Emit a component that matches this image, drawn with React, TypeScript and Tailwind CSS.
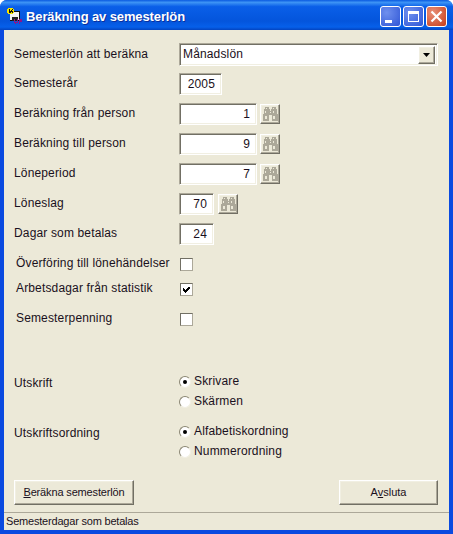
import { ReactNode } from "react";

const sunken =
  "border border-t-[#aca899] border-l-[#aca899] border-r-white border-b-white shadow-[inset_1px_1px_0_#716f64,inset_-1px_-1px_0_#f1efe2]";
const raised =
  "border border-t-white border-l-white border-r-[#716f64] border-b-[#716f64] shadow-[inset_-1px_-1px_0_#aca899,inset_1px_1px_0_#f1efe2] bg-[#ece9d8]";

function Binoculars() {
  return (
    <svg width="15" height="14" viewBox="0 0 15 14" shapeRendering="crispEdges">
      <path
        d="M2 0h4v2h1v2h1V2h1V0h4v2h1v5h1v7H9V8H6v6H0V7h1V2h1z"
        fill="#aca899"
      />
      <path d="M3 1h1v1H3zM10 1h1v1h-1zM2 4h1v2H2zM10 4h1v2h-1zM2 9h2v3H2zM10 9h2v3h-2zM7 5h1v1H7z" fill="#ece9d8" />
    </svg>
  );
}

function LookupButton({ gap }: { gap: string }) {
  return (
    <button className={`${raised} ${gap} flex h-[20px] w-[20px] items-center justify-center`}>
      <Binoculars />
    </button>
  );
}

function Field({ label, value, width, gap }: { label: string; value: string; width: string; gap?: string }) {
  return (
    <div className="flex h-[30px] items-center">
      <span className="w-[165px] pb-[3px]">{label}</span>
      <div className={`${sunken} ${width} h-[22px] bg-white pr-[6px] text-right leading-[21px]`}>{value}</div>
      {gap && <LookupButton gap={gap} />}
    </div>
  );
}

function Check({ label, checked, className }: { label: string; checked?: boolean; className: string }) {
  return (
    <div className={`flex h-[14px] items-center pl-[2px] ${className}`}>
      <span className="w-[164px] pb-[3px]">{label}</span>
      <div className="flex h-[13px] w-[13px] items-center justify-center border border-[#716f64] border-r-[#aca899] border-b-[#aca899] bg-white">
        {checked && (
          <svg width="9" height="9" viewBox="0 0 9 9" shapeRendering="crispEdges">
            <path d="M1 3h1v1h1v1h1V4h1V3h1V2h2v2H7v1H6v1H5v1H4v1H3V7H2V6H1z" fill="#000" />
          </svg>
        )}
      </div>
    </div>
  );
}

function Radio({ label, checked }: { label: string; checked?: boolean }) {
  return (
    <div className="flex h-[20px] items-center">
      <div className="relative h-[12px] w-[12px] rounded-full border border-t-[#8a8672] border-l-[#8a8672] border-r-[#f1efe2] border-b-[#f1efe2] bg-white">
        {checked && <div className="absolute left-[3px] top-[3px] h-[4px] w-[4px] rounded-full bg-black" />}
      </div>
      <span className="ml-[3px] pb-[2px]">{label}</span>
    </div>
  );
}

function RadioGroup({ label, className, children }: { label: string; className: string; children: ReactNode }) {
  return (
    <div className={`flex ${className}`}>
      <span className="w-[165px] pt-[2px]">{label}</span>
      <div>{children}</div>
    </div>
  );
}

function Caption({ children }: { children: ReactNode }) {
  return (
    <div className="flex h-[21px] w-[21px] items-center justify-center rounded-[3px] border border-white bg-[radial-gradient(circle_at_30%_30%,#6f90ee,#2f56d6)]">
      {children}
    </div>
  );
}

export default function App() {
  return (
    <div
      className="flex h-[534px] w-[453px] flex-col overflow-hidden rounded-t-[7px] bg-[#0a4ae0] text-[12px] tracking-[0.15px] text-[#1a1020]"
      style={{ fontFamily: '"Liberation Sans", Arial, sans-serif' }}
    >
      <div className="flex h-[30px] shrink-0 items-center bg-[linear-gradient(180deg,#0a5ae0_0%,#3d94f5_8%,#0a5fe8_22%,#0455dc_70%,#0660ea_90%,#0344c0_100%)] pl-[7px] pr-[6px]">
        <svg className="mt-[2px]" width="16" height="16" viewBox="0 0 16 16" shapeRendering="crispEdges">
          <path d="M3 3h10v10H3z" fill="#f4f4f4" />
          <path d="M3 3h10v1H3zM3 12h10v1H3zM12 3h1v10h-1z" fill="#111" />
          <path d="M5 9h6v4H5z" fill="#222" />
          <path d="M1 0h5v1h1v4H6v1H1V5H0V1h1z" fill="#f5e400" />
          <path d="M2 1h1v4H2zM3 3h1v-1h1V1h1v1H5v1h1v2H5V4H4v1H3z" fill="#111" />
          <path d="M7 11h1v3h2v-3h1v4H9v1H8v-1H7zM12 11h3v3h-2v2h-1z" fill="#8a168c" />
        </svg>
        <span className="ml-[3px] pt-[3px] text-[13px] font-bold tracking-[-0.12px] text-white [text-shadow:1px_1px_0_#0a2f9c]">
          Beräkning av semesterlön
        </span>
        <div className="mt-[3px] ml-auto flex gap-[2px]">
          <Caption>
            <div className="mt-[10px] mr-[4px] h-[3px] w-[7px] bg-white" />
          </Caption>
          <Caption>
            <div className="h-[11px] w-[11px] border border-t-[3px] border-white" />
          </Caption>
          <div className="flex h-[21px] w-[21px] items-center justify-center rounded-[3px] border border-white bg-[radial-gradient(circle_at_30%_30%,#e89078,#c83c18)]">
            <svg width="13" height="13" viewBox="0 0 13 13">
              <path d="M1.5 1.5l10 10M11.5 1.5l-10 10" stroke="#fff" strokeWidth="2.2" />
            </svg>
          </div>
        </div>
      </div>

      <div className="mx-[4px] mb-[4px] flex min-h-0 flex-1 flex-col bg-[#ece9d8]">
        <div className="flex flex-1 flex-col px-[10px] pt-[13px]">
          <div className="flex h-[23px] items-start">
            <span className="w-[165px] pt-[2px]">Semesterlön att beräkna</span>
            <div className={`${sunken} flex h-[23px] w-[259px] items-center justify-between bg-white pl-[3px] pr-[2px]`}>
              <span className="pb-[1px]">Månadslön</span>
              <div className={`${raised} flex h-[18px] w-[17px] items-center justify-center`}>
                <svg width="7" height="4" viewBox="0 0 7 4">
                  <path d="M0 0h7L3.5 4z" fill="#000" />
                </svg>
              </div>
            </div>
          </div>
          <div className="mt-[3px]">
            <Field label="Semesterår" value="2005" width="w-[43px]" />
            <Field label="Beräkning från person" value="1" width="w-[78px]" gap="ml-[3px]" />
            <Field label="Beräkning till person" value="9" width="w-[78px]" gap="ml-[3px]" />
            <Field label="Löneperiod" value="7" width="w-[78px]" gap="ml-[3px]" />
            <Field label="Löneslag" value="70" width="w-[35px]" gap="ml-[4px]" />
            <Field label="Dagar som betalas" value="24" width="w-[35px]" />
          </div>
          <Check label="Överföring till lönehändelser" className="mt-[8px]" />
          <Check label="Arbetsdagar från statistik" checked className="mt-[11px]" />
          <Check label="Semesterpenning" className="mt-[16px]" />
          <RadioGroup label="Utskrift" className="mt-[46px]">
            <Radio label="Skrivare" checked />
            <Radio label="Skärmen" />
          </RadioGroup>
          <RadioGroup label="Utskriftsordning" className="mt-[10px]">
            <Radio label="Alfabetiskordning" checked />
            <Radio label="Nummerordning" />
          </RadioGroup>
          <div className="mt-[18px] flex justify-between pr-[1px] text-[11px] tracking-normal">
            <button className={`${raised} h-[25px] w-[120px] tracking-[-0.15px]`}>
              <span className="underline">B</span>eräkna semesterlön
            </button>
            <button className={`${raised} h-[25px] w-[99px]`}>
              A<span className="underline">v</span>sluta
            </button>
          </div>
        </div>
        <div className="h-[18px] shrink-0 border-t border-[#aca899] pl-[2px] text-[11px] leading-[17px] tracking-[-0.2px]">
          Semesterdagar som betalas
        </div>
      </div>
    </div>
  );
}
